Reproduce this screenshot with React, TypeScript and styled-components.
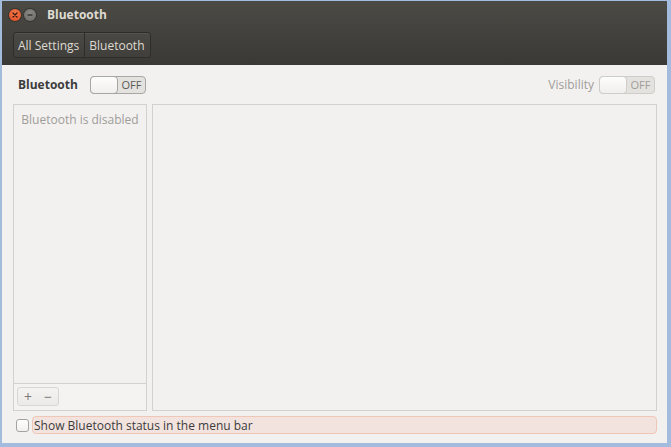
import * as React from 'react';
import styled, { createGlobalStyle } from 'styled-components';

const colors = {
  frame: '#a3bbdc',
  chromeTop: '#4b4a45',
  chromeBottom: '#3a3935',
  chromeText: '#dfdbd2',
  content: '#f2f1f0',
  panelBorder: '#d3d1cd',
  text: '#3c3c3c',
  dim: '#a09d98',
};

const GlobalStyle = createGlobalStyle`
  html, body {
    margin: 0;
    padding: 0;
    background: ${colors.frame};
  }
  * {
    box-sizing: border-box;
  }
`;

const Frame = styled.div`
  width: 671px;
  height: 447px;
  padding: 1px 4px 4px 2px;
  background: ${colors.frame};
  font-family: 'Open Sans', 'DejaVu Sans', sans-serif;
`;

const Window = styled.div`
  display: flex;
  flex-direction: column;
  height: 100%;
  background: ${colors.content};
`;

const Chrome = styled.div`
  height: 64px;
  background: linear-gradient(${colors.chromeTop}, ${colors.chromeBottom});
  display: flex;
  flex-direction: column;
  padding: 0 0 0 7px;
`;

const TitleRow = styled.div`
  height: 27px;
  display: flex;
  align-items: center;
  gap: 3px;
`;

const WinButton = styled.div<{ tone: 'close' | 'min' }>`
  width: 12px;
  height: 12px;
  border-radius: 50%;
  display: flex;
  align-items: center;
  justify-content: center;
  background: ${(p) =>
    p.tone === 'close'
      ? 'radial-gradient(circle at 50% 35%, #f47a50, #de4a1c)'
      : 'radial-gradient(circle at 50% 35%, #8a8883, #6b6964)'};
  box-shadow: 0 0 0 1px rgba(0, 0, 0, 0.25);
`;

const Title = styled.div`
  margin-left: 8px;
  color: ${colors.chromeText};
  font-size: 12px;
  font-weight: bold;
`;

const Crumbs = styled.div`
  margin: 4px 0 0 4px;
  display: flex;
  align-self: flex-start;
  height: 26px;
  border: 1px solid #2e2d2a;
  border-radius: 3px;
  background: linear-gradient(#4a4944, #403f3b);
  box-shadow: inset 0 1px rgba(255, 255, 255, 0.06);
`;

const Crumb = styled.div`
  display: flex;
  align-items: center;
  padding: 0 5px 0 4px;
  color: ${colors.chromeText};
  font-size: 12px;
  & + & {
    border-left: 1px solid #2e2d2a;
  }
`;

const Body = styled.div`
  flex: 1;
  display: flex;
  flex-direction: column;
  padding: 10px 10px 9px 11px;
`;

const TopBar = styled.div`
  display: flex;
  align-items: center;
  height: 19px;
  margin-bottom: 10px;
  padding: 0 2px 0 5px;
`;

const Label = styled.div<{ dim?: boolean }>`
  font-size: 12px;
  font-weight: ${(p) => (p.dim ? 'normal' : 'bold')};
  color: ${(p) => (p.dim ? colors.dim : colors.text)};
  margin-right: ${(p) => (p.dim ? '5px' : '12px')};
`;

const Spacer = styled.div`
  flex: 1;
`;

const Switch = styled.div<{ dim?: boolean }>`
  width: 56px;
  height: 18px;
  border: 1px solid ${(p) => (p.dim ? '#cfcdc9' : '#a9a7a3')};
  border-radius: 4px;
  background: #e4e2df;
  display: flex;
`;

const Knob = styled.div<{ dim?: boolean }>`
  width: 28px;
  margin: -1px 0 -1px -1px;
  border: 1px solid ${(p) => (p.dim ? '#cfcdc9' : '#a9a7a3')};
  border-radius: 4px;
  background: linear-gradient(#fdfdfc, #f0efed);
`;

const SwitchText = styled.div<{ dim?: boolean }>`
  flex: 1;
  display: flex;
  align-items: center;
  justify-content: center;
  font-size: 11px;
  color: ${(p) => (p.dim ? colors.dim : '#5a5955')};
`;

const Panels = styled.div`
  flex: 1;
  display: flex;
  gap: 5px;
`;

const Panel = styled.div<{ grow?: boolean }>`
  ${(p) => (p.grow ? 'flex: 1;' : 'width: 134px;')}
  border: 1px solid ${colors.panelBorder};
  background: ${colors.content};
  display: flex;
  flex-direction: column;
`;

const Empty = styled.div`
  flex: 1;
  text-align: center;
  padding-top: 6px;
  font-size: 12px;
  color: ${colors.dim};
`;

const PanelFoot = styled.div`
  height: 27px;
  border-top: 1px solid ${colors.panelBorder};
  padding: 3px 0 0 3px;
  background: #f4f3f2;
`;

const ToolGroup = styled.div`
  width: 42px;
  height: 19px;
  border: 1px solid #d8d6d2;
  border-radius: 3px;
  background: linear-gradient(#f4f3f2, #eceae8);
  display: flex;
  align-items: center;
  justify-content: space-around;
  color: #7b7975;
  font-size: 14px;
  line-height: 1;
`;

const Bottom = styled.div`
  display: flex;
  align-items: center;
  margin-top: 5px;
  padding-left: 3px;
`;

const Check = styled.div`
  width: 13px;
  height: 13px;
  border: 1px solid #a5a39f;
  border-radius: 3px;
  background: linear-gradient(#ffffff, #f1f0ee);
  margin-right: 3px;
`;

const CheckLabel = styled.div`
  flex: 1;
  height: 18px;
  display: flex;
  align-items: center;
  padding-left: 1px;
  border: 1px solid #f0c6b6;
  border-radius: 4px;
  background: #f2e3de;
  font-size: 12px;
  color: ${colors.text};
`;

function Toggle({ dim }: { dim?: boolean }) {
  return (
    <Switch dim={dim}>
      <Knob dim={dim} />
      <SwitchText dim={dim}>OFF</SwitchText>
    </Switch>
  );
}

export default function App() {
  return (
    <Frame>
      <GlobalStyle />
      <Window>
        <Chrome>
          <TitleRow>
            <WinButton tone="close">
              <svg width="6" height="6" viewBox="0 0 6 6">
                <path d="M1 1L5 5M5 1L1 5" stroke="#3b1a0e" strokeWidth="1.3" strokeLinecap="round" />
              </svg>
            </WinButton>
            <WinButton tone="min">
              <svg width="6" height="6" viewBox="0 0 6 6">
                <path d="M1 3H5" stroke="#3a3935" strokeWidth="1.3" strokeLinecap="round" />
              </svg>
            </WinButton>
            <Title>Bluetooth</Title>
          </TitleRow>
          <Crumbs>
            <Crumb>All Settings</Crumb>
            <Crumb>Bluetooth</Crumb>
          </Crumbs>
        </Chrome>
        <Body>
          <TopBar>
            <Label>Bluetooth</Label>
            <Toggle />
            <Spacer />
            <Label dim>Visibility</Label>
            <Toggle dim />
          </TopBar>
          <Panels>
            <Panel>
              <Empty>Bluetooth is disabled</Empty>
              <PanelFoot>
                <ToolGroup>
                  <span>+</span>
                  <span>−</span>
                </ToolGroup>
              </PanelFoot>
            </Panel>
            <Panel grow />
          </Panels>
          <Bottom>
            <Check />
            <CheckLabel>Show Bluetooth status in the menu bar</CheckLabel>
          </Bottom>
        </Body>
      </Window>
    </Frame>
  );
}
